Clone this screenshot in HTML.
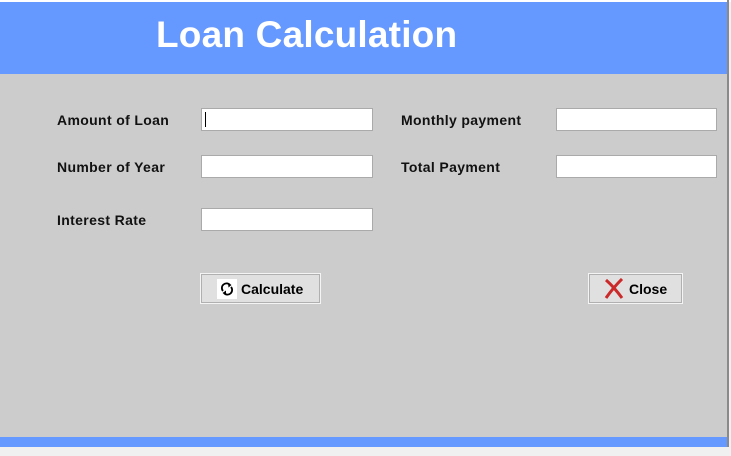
<!DOCTYPE html>
<html><head><style>
body{margin:0;width:731px;height:456px;background:#f0f0f0;position:relative;overflow:hidden;font-family:"Liberation Sans",sans-serif}
.abs{position:absolute}
.lbl{position:absolute;font-weight:bold;font-size:14px;color:#111;letter-spacing:0.35px}
.in{position:absolute;width:172px;height:23px;background:#fff;border:1px solid #aaa;box-sizing:border-box}
.btn{position:absolute;height:29px;background:#e0e0e0;border:1px solid #b0b0b0;outline:1px solid #f4f4f4;box-sizing:border-box;font-weight:bold;font-size:14px;color:#000}
</style></head><body>
<div class="abs" style="left:0;top:0;width:731px;height:2px;background:#fff"></div>
<div class="abs" style="left:0;top:2px;width:727px;height:72px;background:#6699ff"></div>
<div class="abs" style="left:0;top:74px;width:727px;height:363px;background:#cccccc"></div>
<div class="abs" style="left:727px;top:0;width:2px;height:447px;background:#8a8a8a"></div>
<div class="abs" style="left:0;top:437px;width:727px;height:10px;background:#6699ff"></div>
<div class="abs" style="left:156px;top:14px;font-weight:bold;font-size:37px;color:#fff;letter-spacing:0.2px">Loan Calculation</div>
<div class="lbl" style="left:57px;top:112px">Amount of Loan</div>
<div class="lbl" style="left:57px;top:159px">Number of Year</div>
<div class="lbl" style="left:57px;top:212px">Interest Rate</div>
<div class="lbl" style="left:401px;top:112px">Monthly payment</div>
<div class="lbl" style="left:401px;top:159px">Total Payment</div>
<div class="in" style="left:201px;top:108px"><div class="abs" style="left:3px;top:3px;width:1px;height:15px;background:#000"></div></div>
<div class="in" style="left:201px;top:155px"></div>
<div class="in" style="left:201px;top:208px"></div>
<div class="in" style="left:556px;top:108px;width:161px"></div>
<div class="in" style="left:556px;top:155px;width:161px"></div>
<div class="btn" style="left:201px;top:274px;width:119px">
<svg class="abs" style="left:15px;top:4px" width="20" height="20" viewBox="0 0 20 20"><rect width="20" height="20" fill="#fff"/><path d="M6 12 A4.5 4.5 0 0 1 13 6" stroke="#000" stroke-width="1.8" fill="none"/><path d="M14 8 A4.5 4.5 0 0 1 7 14" stroke="#000" stroke-width="1.8" fill="none"/><path d="M11 4 L14.5 6 L11.5 8.5Z M9 11.5 L5.5 14 L9 16Z" fill="#000"/></svg>
<div class="abs" style="left:39px;top:6px">Calculate</div></div>
<div class="btn" style="left:589px;top:274px;width:93px">
<svg class="abs" style="left:14px;top:3px" width="20" height="21" viewBox="0 0 20 21"><path d="M2 2 Q10 9 18 20" stroke="#cc2a2a" stroke-width="3" fill="none"/><path d="M18 1 Q9 10 2 20" stroke="#cc2a2a" stroke-width="3" fill="none"/></svg>
<div class="abs" style="left:39px;top:6px">Close</div></div>
</body></html>
